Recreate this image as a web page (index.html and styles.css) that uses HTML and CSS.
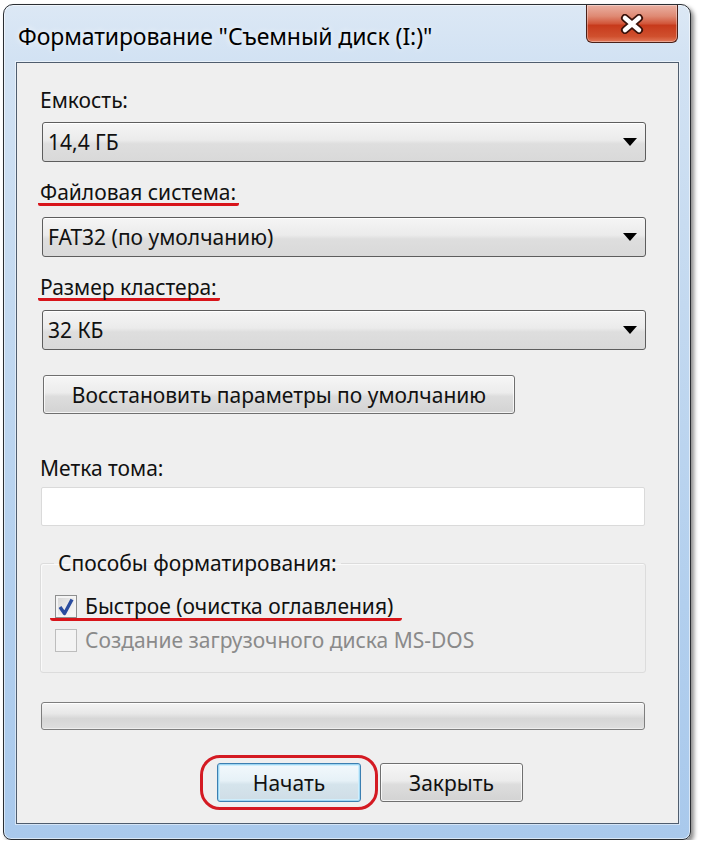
FILE: index.html
```html
<!DOCTYPE html>
<html lang="ru">
<head>
<meta charset="utf-8">
<title>Форматирование</title>
<link rel="stylesheet" href="styles.css">
</head>
<body>
<div class="window">
  <div class="titlebar">
    <div class="title">Форматирование "Съемный диск (I:)"</div>
    <div class="close-btn">
      <svg width="26" height="20" viewBox="0 0 26 20">
        <path d="M6 4 L20 16 M20 4 L6 16" stroke="#3a120a" stroke-width="8" stroke-linecap="round" fill="none"/>
        <path d="M6 4 L20 16 M20 4 L6 16" stroke="#ffffff" stroke-width="4.5" stroke-linecap="round" fill="none"/>
      </svg>
    </div>
  </div>
  <div class="panel">
    <div class="label l1">Емкость:</div>
    <div class="combo c1"><span>14,4 ГБ</span><span class="arrow"></span></div>
    <div class="label l2"><span class="mark">Файловая система:</span></div>
    <div class="combo c2"><span>FAT32 (по умолчанию)</span><span class="arrow"></span></div>
    <div class="label l3"><span class="mark">Размер кластера:</span></div>
    <div class="combo c3"><span>32 КБ</span><span class="arrow"></span></div>
    <div class="btn restore">Восстановить параметры по умолчанию</div>
    <div class="label l4">Метка тома:</div>
    <div class="textbox"></div>
    <fieldset class="group">
      <legend>Способы форматирования:</legend>
      <div class="check-row marked">
        <span class="cb checked">
          <svg width="18" height="19" viewBox="0 0 18 19"><path d="M3 10 L7.5 16.5 L15 2.5" stroke="#2a4c9f" stroke-width="3.4" fill="none" stroke-linejoin="round"/></svg>
        </span>
        <span class="cb-text">Быстрое (очистка оглавления)</span>
      </div>
      <div class="check-row disabled">
        <span class="cb"></span>
        <span class="cb-text">Создание загрузочного диска MS-DOS</span>
      </div>
    </fieldset>
    <div class="progress"></div>
    <div class="actions">
      <div class="ring"><div class="btn default">Начать</div></div>
      <div class="btn close">Закрыть</div>
    </div>
  </div>
</div>
</body>
</html>
```

FILE: styles.css
```css
html, body {
  margin: 0;
  padding: 0;
  background: #ffffff;
}
body {
  font-family: "Noto Sans", "Open Sans", sans-serif;
  font-size: 21px;
  color: #111;
}
.window {
  margin: 4px 0 0 3px;
  width: 688px;
  box-sizing: border-box;
  border: 1px solid #2a2e33;
  border-radius: 10px 10px 8px 8px;
  background: linear-gradient(180deg, #dce8f5 0px, #d2e2f3 55px, #c3d9f0 300px, #b2cfee 600px, #a9c9ec 100%);
  box-shadow: inset 0 0 0 1px rgba(255,255,255,0.55), 3px 3px 4px rgba(0,0,0,0.45);
  padding-bottom: 15px;
}
.titlebar {
  height: 57px;
  display: flex;
  justify-content: space-between;
  align-items: flex-start;
}
.title {
  margin: 17px 0 0 14px;
  line-height: 28px;
  font-size: 23px;
  letter-spacing: -0.1px;
  color: #000;
  text-shadow: 0 0 6px rgba(255,255,255,0.9);
}
.close-btn {
  width: 92px;
  height: 38px;
  box-sizing: border-box;
  margin-right: 12px;
  border: 1px solid #4a2018;
  border-top: none;
  border-radius: 0 0 6px 6px;
  background: linear-gradient(180deg, #eab1a3 0%, #df8a74 30%, #d2573b 50%, #c73a1c 55%, #d0502e 85%, #e2795a 100%);
  box-shadow: inset 0 0 0 1px rgba(255,255,255,0.35);
  display: flex;
  align-items: center;
  justify-content: center;
}
.panel {
  margin: 0 11px 0 12px;
  border: 1px solid #4f5d6e;
  background: #efefef;
  box-shadow: 0 0 0 1px rgba(255,255,255,0.5);
  padding: 0 32px 13px 25px;
}
.label {
  line-height: 24px;
  margin-left: -2px;
  color: #111;
}
.l1 { margin-top: 25px; }
.l2 { margin-top: 19px; }
.l3 { margin-top: 19px; }
.l4 { margin-top: 42px; }
.mark {
  display: block;
  width: fit-content;
  line-height: 22px;
  padding: 0 3px 0 2px;
  margin-left: -2px;
  border-bottom: 3px solid #d8141a;
  border-radius: 0 0 2px 2px;
}
.combo {
  height: 40px;
  box-sizing: border-box;
  border: 1px solid #5d5d5d;
  border-radius: 3px;
  background: linear-gradient(180deg, #f5f5f5 0%, #ebebeb 45%, #dedede 55%, #d9d9d9 100%);
  box-shadow: inset 0 1px 0 #ffffff;
  display: flex;
  align-items: center;
  justify-content: space-between;
  padding: 0 8px 0 5px;
}
.c1 { margin-top: 10px; }
.c2 { margin-top: 11px; }
.c3 { margin-top: 9px; }
.arrow {
  width: 0;
  height: 0;
  border-left: 7px solid transparent;
  border-right: 7px solid transparent;
  border-top: 8px solid #000;
}
.btn {
  height: 39px;
  box-sizing: border-box;
  border: 1px solid #6f6f6f;
  border-radius: 3px;
  background: linear-gradient(180deg, #f6f6f6 0%, #ececec 45%, #dddddd 55%, #d3d3d3 100%);
  box-shadow: inset 0 0 0 1px rgba(255,255,255,0.75);
  display: flex;
  align-items: center;
  justify-content: center;
  color: #111;
}
.restore {
  margin-top: 25px;
  margin-left: 1px;
  width: 472px;
}
.textbox {
  margin-top: 7px;
  margin-left: -1px;
  width: 604px;
  height: 39px;
  box-sizing: border-box;
  background: #ffffff;
  border: 1px solid #dadada;
  border-radius: 2px;
}
.group {
  margin: 25px 0 0 -2px;
  width: 606px;
  box-sizing: border-box;
  border: 1px solid #dcdcdc;
  border-radius: 3px;
  box-shadow: inset 1px 1px 0 #fafafa;
  padding: 0 0 20px 9px;
  min-width: 0;
}
.group legend {
  padding: 0 4px;
  margin-left: 4px;
  line-height: 24px;
  color: #111;
}
.check-row {
  display: flex;
  align-items: center;
  width: fit-content;
  height: 24px;
  padding: 0 9px 0 5px;
  gap: 8px;
}
.marked {
  margin-top: 19px;
  border-bottom: 3px solid #d8141a;
  border-radius: 0 0 3px 3px;
}
.disabled {
  margin-top: 7px;
  color: #8a8a8a;
}
.cb {
  width: 22px;
  height: 23px;
  box-sizing: border-box;
  border: 1px solid #8e8f8f;
  background: linear-gradient(135deg, #d2d2d2 0%, #ececec 55%, #fbfbfb 100%);
  box-shadow: inset 0 0 0 2px #f4f4f4;
  display: flex;
  align-items: center;
  justify-content: center;
}
.disabled .cb {
  border-color: #bdbdbd;
  background: #f3f3f3;
  box-shadow: none;
}
.cb-text {
  line-height: 24px;
}
.progress {
  margin-top: 29px;
  margin-left: -1px;
  width: 604px;
  height: 28px;
  box-sizing: border-box;
  border: 1px solid #7e7e7e;
  border-radius: 3px;
  background: linear-gradient(180deg, #f4f4f4 0%, #e8e8e8 40%, #d6d6d6 60%, #dedede 100%);
  box-shadow: inset 0 1px 0 #ffffff, inset 0 -1px 0 #eeeeee;
}
.actions {
  display: flex;
  align-items: center;
  gap: 2px;
  margin-top: 25px;
  padding-left: 158px;
}
.ring {
  border: 3px solid #d41a22;
  border-radius: 20px;
  padding: 5px 14px;
}
.default {
  width: 144px;
  border-color: #3c7fb1;
  background: linear-gradient(180deg, #f3f9fc 0%, #e6f1f7 45%, #d5e4ec 55%, #cfdde6 100%);
  box-shadow: inset 0 0 0 1px #9fd6f2, inset 0 0 0 2px #cfeefc;
}
.close {
  width: 143px;
}
```
